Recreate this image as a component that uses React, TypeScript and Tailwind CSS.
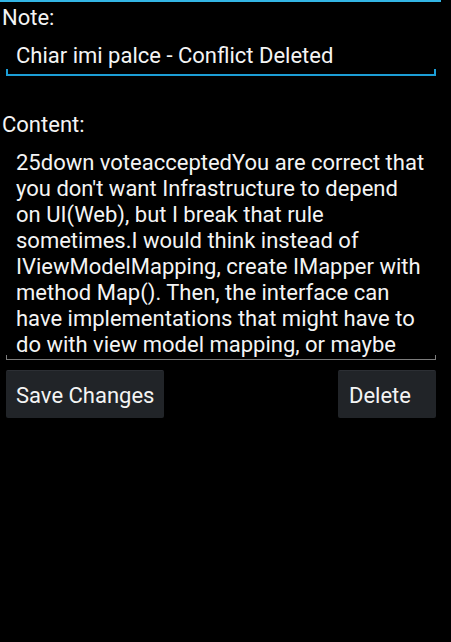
import React from "react";

const lines = [
  "25down voteacceptedYou are correct that",
  "you don't want Infrastructure to depend",
  "on UI(Web), but I break that rule",
  "sometimes.I would think instead of",
  "IViewModelMapping, create IMapper with",
  "method Map(). Then, the interface can",
  "have implementations that might have to",
  "do with view model mapping, or maybe",
];

export default function App() {
  return (
    <div className="w-[451px] h-[642px] bg-black font-['Roboto',sans-serif] text-[22px] leading-[26px] text-[#f4f4f4] overflow-hidden">
      <div className="h-[2px] w-[441px] bg-[#33b5e5]" />
      <div className="pl-[2px] mt-[3px]">Note:</div>

      <div className="mx-[6px] w-[430px] mt-[12px]">
        <div className="pl-[10px] whitespace-nowrap">Chiar imi palce - Conflict Deleted</div>
        <div className="h-[7px] border-x-2 border-b-2 border-[#1c9ed6]" />
      </div>

      <div className="pl-[2px] mt-[36px]">Content:</div>

      <div className="mx-[6px] w-[430px] mt-[12px]">
        <div className="pl-[10px] h-[208px] overflow-hidden">
          {lines.map((l, i) => (
            <div key={i} className="whitespace-nowrap">{l}</div>
          ))}
        </div>
        <div className="h-[5px] -mt-[3px] border-x border-b border-[#7c7c7c]" />
      </div>

      <div className="flex justify-between pr-[15px] pl-[6px] mt-[10px]">
        <button className="w-[158px] h-[48px] flex items-center pl-[10px] pt-[3px] bg-[#212428] border-t border-[#2c2f34] rounded-[2px] text-left">
          Save Changes
        </button>
        <button className="w-[98px] h-[48px] flex items-center pl-[11px] pt-[3px] bg-[#212428] border-t border-[#2c2f34] rounded-[2px] text-left">
          Delete
        </button>
      </div>
    </div>
  );
}
